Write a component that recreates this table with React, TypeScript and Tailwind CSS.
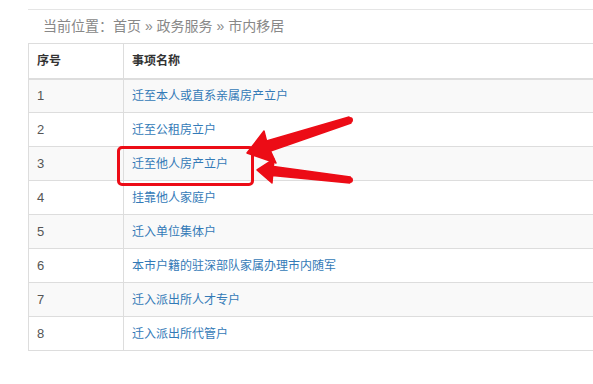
import React from "react";

const items = [
  "迁至本人或直系亲属房产立户",
  "迁至公租房立户",
  "迁至他人房产立户",
  "挂靠他人家庭户",
  "迁入单位集体户",
  "本市户籍的驻深部队家属办理市内随军",
  "迁入派出所人才专户",
  "迁入派出所代管户",
];

function Arrows() {
  return (
    <svg
      className="absolute left-0 top-0 pointer-events-none"
      width="593"
      height="384"
      viewBox="0 0 593 384"
    >
      <g fill="#ec0c16" stroke="#ec0c16" strokeWidth="1.5" strokeLinejoin="round">
        <polygon points="247,153 264,131 266.5,141 349,117 351,123 270.5,151 276,163" />
        <polygon points="257,170 274,159 273.4,166.5 350.3,177 349.7,183 272.6,175.5 272,183" />
      </g>
      <circle cx="350" cy="120" r="3" fill="#ec0c16" />
      <circle cx="350" cy="180" r="3" fill="#ec0c16" />
    </svg>
  );
}

export default function App() {
  return (
    <div
      className="relative w-[593px] h-[384px] overflow-hidden bg-white"
      style={{ fontFamily: '"Liberation Sans", "Noto Sans CJK SC", sans-serif' }}
    >
      <div className="ml-[28px] pt-[9px]">
        <div className="border-t border-[#e5e5e5]" />
        <div className="h-[33px] pl-[15px] flex items-center text-[14px] text-[#888]">
          当前位置：首页 » 政务服务 » 市内移居
        </div>
        <table className="w-[620px] border-collapse text-[12px]">
          <thead>
            <tr className="h-[35px]">
              <th className="w-[95px] border border-[#ddd] border-b-2 pl-[8px] text-left font-bold text-[#333]">
                序号
              </th>
              <th className="border border-[#ddd] border-b-2 pl-[8px] text-left font-bold text-[#333]">
                事项名称
              </th>
            </tr>
          </thead>
          <tbody>
            {items.map((name, i) => (
              <tr key={i} className={i % 2 === 0 ? "h-[34px] bg-[#f9f9f9]" : "h-[34px] bg-white"}>
                <td className="border border-[#ddd] pl-[8px] text-[13px] text-[#555]">{i + 1}</td>
                <td className="border border-[#ddd] pl-[8px] text-[#337ab7]">{name}</td>
              </tr>
            ))}
          </tbody>
        </table>
      </div>
      <div className="absolute left-[117px] top-[146px] w-[137px] h-[40px] rounded-[5px] border-[3px] border-[#ec0c16]" />
      <Arrows />
    </div>
  );
}
